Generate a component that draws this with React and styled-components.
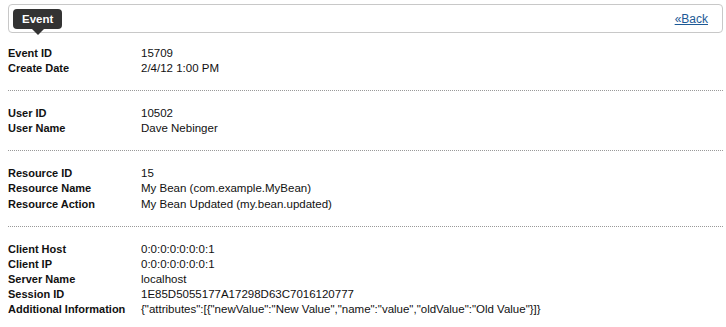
import React from 'react';
import styled, { createGlobalStyle } from 'styled-components';

const GlobalStyle = createGlobalStyle`
  body {
    margin: 0;
    background: #fff;
    font-family: "Liberation Sans", Arial, sans-serif;
    font-size: 12px;
    color: #111;
  }
`;

const Page = styled.div`
  padding: 4px 3px 0 8px;
`;

const Header = styled.div`
  position: relative;
  display: flex;
  align-items: center;
  justify-content: space-between;
  height: 29px;
  box-sizing: border-box;
  border: 1px solid #c8c8c8;
  border-radius: 4px;
  padding: 0 14px 0 4px;
`;

const Tag = styled.div`
  position: relative;
  height: 20px;
  line-height: 20px;
  padding: 0 9px;
  background: #333;
  color: #fff;
  font-weight: bold;
  font-size: 11.5px;
  border-radius: 4px;

  &::after {
    content: '';
    position: absolute;
    left: 50%;
    bottom: -6px;
    margin-left: -6px;
    border-left: 6px solid transparent;
    border-right: 6px solid transparent;
    border-top: 6px solid #333;
  }
`;

const BackLink = styled.a`
  color: #1d5a96;
  text-decoration: underline;
  cursor: pointer;
`;

const Section = styled.div`
  padding: ${p => (p.$first ? '13px' : '15px')} 0 14px;
  border-bottom: ${p => (p.$last ? 'none' : '1px dotted #999')};
`;

const Row = styled.div`
  display: grid;
  grid-template-columns: 133px 1fr;
  align-items: baseline;
  line-height: 15.1px;
`;

const Label = styled.div`
  font-weight: bold;
  font-size: 11px;
`;

const Value = styled.div`
  white-space: nowrap;
  font-size: 11.5px;
`;

const sections = [
  [
    ['Event ID', '15709'],
    ['Create Date', '2/4/12 1:00 PM'],
  ],
  [
    ['User ID', '10502'],
    ['User Name', 'Dave Nebinger'],
  ],
  [
    ['Resource ID', '15'],
    ['Resource Name', 'My Bean (com.example.MyBean)'],
    ['Resource Action', 'My Bean Updated (my.bean.updated)'],
  ],
  [
    ['Client Host', '0:0:0:0:0:0:0:1'],
    ['Client IP', '0:0:0:0:0:0:0:1'],
    ['Server Name', 'localhost'],
    ['Session ID', '1E85D5055177A17298D63C7016120777'],
    ['Additional Information', '{"attributes":[{"newValue":"New Value","name":"value","oldValue":"Old Value"}]}'],
  ],
];

export default function App() {
  return (
    <Page>
      <GlobalStyle />
      <Header>
        <Tag>Event</Tag>
        <BackLink>«Back</BackLink>
      </Header>
      {sections.map((rows, i) => (
        <Section key={i} $first={i === 0} $last={i === sections.length - 1}>
          {rows.map(([label, value]) => (
            <Row key={label}>
              <Label>{label}</Label>
              <Value>{value}</Value>
            </Row>
          ))}
        </Section>
      ))}
    </Page>
  );
}
